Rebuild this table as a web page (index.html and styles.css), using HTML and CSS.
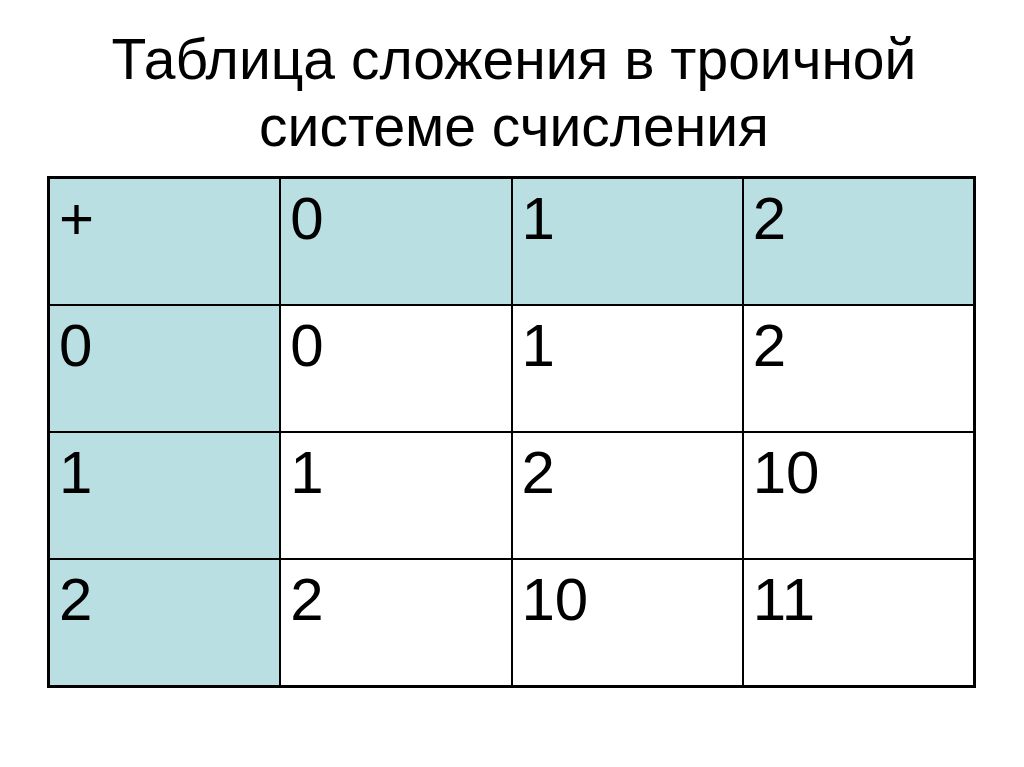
FILE: index.html
```html
<!DOCTYPE html>
<html lang="ru">
<head>
<meta charset="utf-8">
<title>Таблица сложения в троичной системе счисления</title>
<link rel="stylesheet" href="styles.css">
</head>
<body>
<div class="slide">
  <h1 class="title">Таблица сложения в троичной<br>системе счисления</h1>
  <div class="table">
    <div class="cell head">+</div>
    <div class="cell head">0</div>
    <div class="cell head">1</div>
    <div class="cell head">2</div>

    <div class="cell head">0</div>
    <div class="cell">0</div>
    <div class="cell">1</div>
    <div class="cell">2</div>

    <div class="cell head">1</div>
    <div class="cell">1</div>
    <div class="cell">2</div>
    <div class="cell">10</div>

    <div class="cell head">2</div>
    <div class="cell">2</div>
    <div class="cell">10</div>
    <div class="cell">11</div>
  </div>
</div>
</body>
</html>
```

FILE: styles.css
```css
html, body {
  margin: 0;
  padding: 0;
  background: #ffffff;
}

.slide {
  width: 1024px;
  height: 767px;
  font-family: "Liberation Sans", Arial, sans-serif;
  color: #000;
  display: flex;
  flex-direction: column;
  align-items: flex-start;
}

.title {
  margin: 0;
  padding-top: 26px;
  width: 1028px;
  font-size: 57px;
  font-weight: normal;
  line-height: 67px;
  text-align: center;
}

.table {
  margin-top: 16px;
  margin-left: 47px;
  width: 929px;
  height: 512px;
  box-sizing: border-box;
  background: #000;
  padding: 3px;
  display: grid;
  grid-template-columns: repeat(4, 1fr);
  grid-template-rows: repeat(4, 1fr);
  column-gap: 2px;
  row-gap: 2px;
}

.cell {
  background: #ffffff;
  font-size: 60px;
  line-height: 64px;
  padding: 8px 9px;
}

.head {
  background: #badfe3;
}
```
